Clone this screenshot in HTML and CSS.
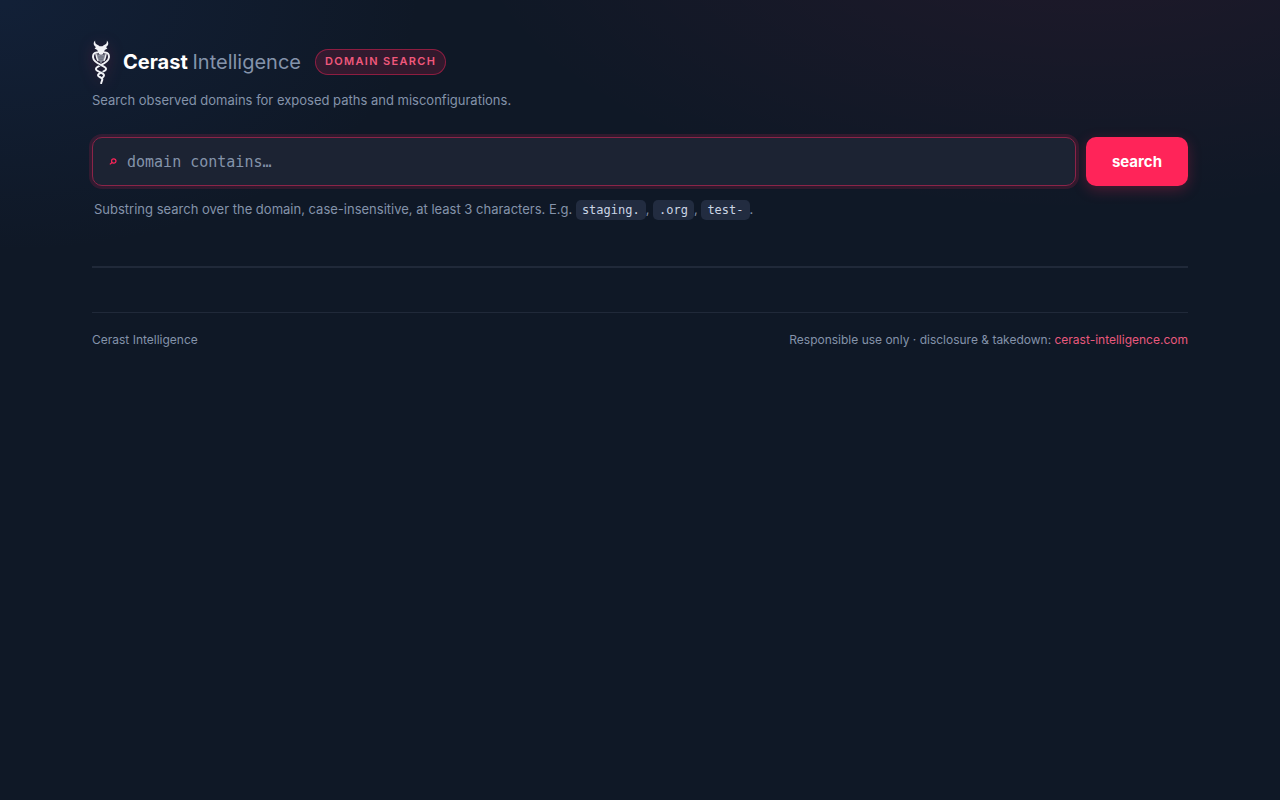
FILE: index.html
```html
<!DOCTYPE html>
<html lang="en">

<head>
    <meta charset="utf-8">
    <meta name="viewport" content="width=device-width, initial-scale=1">
    <title>Cerast Intelligence</title>
    <link rel="stylesheet" href="styles.css">
</head>

<body>
    <div class="container">
        <header>
            <div class="brand">
                <svg class="logo" viewBox="0 0 18 44" fill="none" stroke="#f1f2f6" stroke-linecap="round" aria-hidden="true">
                    <!-- horns and head -->
                    <path d="M3.1 .5C.8 3 1.6 5.6 4 7L2.6 8.4L5.3 10L6 12.5L7.6 14.8H10.4L12 12.5L12.7 10L15.4 8.4L14 7C16.4 5.6 17.2 3 14.9 .5C15.2 3.2 13.8 4.6 11.7 5.2L10.4 6.2H7.6L6.3 5.2C4.2 4.6 2.8 3.2 3.1 .5Z" fill="#f1f2f6" stroke="none"/>
                    <!-- chest -->
                    <path d="M5.2 14L9 15.2L12.8 14L13.2 18L9 23.5L4.8 18Z" fill="#888b99" stroke="none"/>
                    <path d="M6.5 17H11.5M7 19.2H11" stroke="#555969" stroke-width=".6"/>
                    <!-- bodies -->
                    <path d="M5.3 12.4C2 12.2 .8 14.5 1.1 17.5C1.5 21.3 5 23 8.8 24.8C13 26.8 15.5 28.4 13 30.6C10.8 32.4 6 33 6 35.2C6 37.2 9.8 37.2 10.3 39C10.5 40.3 9.3 41.5 9.2 43.3" stroke-width="2"/>
                    <path d="M12.7 12.4C16 12.2 17.2 14.5 16.9 17.5C16.5 21.3 13 23 9.2 24.8C5 26.8 2.5 28.4 5 30.6C7.2 32.4 12 33 12 35.2C11.9 36.7 10.8 37.3 9.8 38.1" stroke-width="2"/>
                    <path d="M4 14.2C4.6 16.5 4.3 18.5 6 20.5M14 14.2C13.4 16.5 13.7 18.5 12 20.5" stroke-width="1.4"/>
                    <path d="M6.8 25.2L8.6 26.2M9.4 31.2L11 32.2" stroke="#111829" stroke-width=".7"/>
                </svg>
                <h1>Cerast <span>Intelligence</span></h1>
                <div class="badge">Domain search</div>
            </div>
            <p class="tagline">Search observed domains for exposed paths and misconfigurations.</p>
        </header>

        <main>
            <form class="search">
                <label class="search-box" for="query">
                    <svg class="search-icon" viewBox="0 0 8 8" fill="none" stroke="#ff2459" stroke-width="1.2" aria-hidden="true">
                        <circle cx="4.8" cy="3" r="2.2"/>
                        <path d="M3.2 4.5L.8 6.4"/>
                    </svg>
                    <input type="text" id="query" placeholder="domain contains…" aria-label="Domain contains" autocomplete="off">
                </label>
                <button type="submit">search</button>
            </form>
            <p class="hint">Substring search over the domain, case-insensitive, at least 3 characters. E.g. <code>staging.</code>, <code>.org</code>, <code>test-</code>.</p>
            <div class="results"></div>
        </main>

        <footer>
            <span>Cerast Intelligence</span>
            <span>Responsible use only · disclosure &amp; takedown: <a href="https://cerast-intelligence.com">cerast-intelligence.com</a></span>
        </footer>
    </div>
</body>

</html>
```

FILE: styles.css
```css
* {
    box-sizing: border-box;
}

body {
    margin: 0;
    min-height: 100vh;
    font-family: Inter, "Liberation Sans", sans-serif;
    font-size: 14px;
    color: #8493aa;
    background:
        radial-gradient(900px 420px at 85% -10%, rgba(255, 36, 89, 0.07), transparent 70%),
        radial-gradient(700px 420px at 0% 0%, rgba(34, 75, 145, 0.16), transparent 60%),
        #0f1826;
}

.container {
    max-width: 1160px;
    margin: 0 auto;
    padding: 40px 32px;
}

.brand {
    display: flex;
    align-items: center;
}

.logo {
    width: 18px;
    height: 44px;
    margin-right: 13px;
    filter: drop-shadow(0 2px 8px rgba(255, 36, 89, 0.2));
}

h1 {
    margin: 0;
    font-size: 20px;
    line-height: 24px;
    font-weight: 700;
    color: white;
}

h1 span {
    font-weight: 400;
    color: #8493aa;
}

.badge {
    margin-left: 14px;
    padding: 5px 9px 6px;
    font-size: 11px;
    line-height: 13px;
    font-weight: 600;
    letter-spacing: 0.12em;
    text-transform: uppercase;
    color: #f0587c;
    background: rgba(255, 36, 89, 0.15);
    border: 1px solid rgba(255, 36, 89, 0.45);
    border-radius: 13px;
}

.tagline {
    margin: 6px 0 0;
    font-size: 13px;
    line-height: 20px;
}

.search {
    display: flex;
    gap: 10px;
    margin-top: 27px;
}

.search-box {
    flex: 1;
    display: flex;
    align-items: center;
    gap: 10px;
    height: 49px;
    padding: 0 16px;
    background: #1c2333;
    border: 1px solid #8b2448;
    border-radius: 10px;
    box-shadow: 0 0 0 3px rgba(255, 36, 89, 0.14);
}

.search-icon {
    width: 8px;
    height: 8px;
}

input {
    flex: 1;
    min-width: 0;
    padding: 0;
    font-family: "DejaVu Sans Mono", monospace;
    font-size: 15px;
    line-height: 20px;
    color: #e5eaf3;
    background: none;
    border: none;
    outline: none;
}

input::placeholder {
    color: #8493aa;
}

button {
    padding: 0 26px;
    font-family: inherit;
    font-size: 15px;
    font-weight: 700;
    color: white;
    background: #ff2459;
    border: none;
    border-radius: 10px;
    box-shadow: 0 4px 14px rgba(255, 36, 89, 0.25);
    cursor: pointer;
}

.hint {
    margin: 13px 2px 0;
    font-size: 13px;
    line-height: 20px;
}

code {
    display: inline-block;
    padding: 0 6px;
    font-family: "DejaVu Sans Mono", monospace;
    font-size: 12px;
    color: #cbd5e5;
    background: #222c40;
    border-radius: 5px;
}

.results {
    margin-top: 46px;
    border-top: 2px solid #202939;
}

footer {
    display: flex;
    justify-content: space-between;
    gap: 16px;
    margin-top: 44px;
    padding-top: 17px;
    font-size: 12px;
    line-height: 20px;
    border-top: 1px solid #202939;
}

a {
    color: #e9597d;
    text-decoration: none;
}
```
